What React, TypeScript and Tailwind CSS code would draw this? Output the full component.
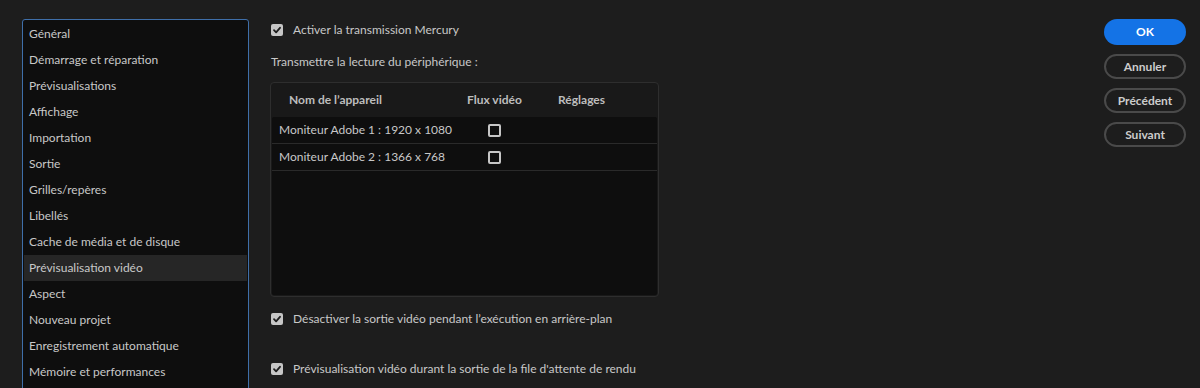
import React from "react";

const sections = [
  "Général",
  "Démarrage et réparation",
  "Prévisualisations",
  "Affichage",
  "Importation",
  "Sortie",
  "Grilles/repères",
  "Libellés",
  "Cache de média et de disque",
  "Prévisualisation vidéo",
  "Aspect",
  "Nouveau projet",
  "Enregistrement automatique",
  "Mémoire et performances",
];

const devices = ["Moniteur Adobe 1 : 1920 x 1080", "Moniteur Adobe 2 : 1366 x 768"];

const Checked = () => (
  <span className="flex h-[12px] w-[12px] items-center justify-center rounded-[2px] bg-[#c6c6c6]">
    <svg width="10" height="10" viewBox="0 0 10 10">
      <path d="M2 5.2 L4.1 7.3 L8 2.8" fill="none" stroke="#1d1d1d" strokeWidth="1.8" strokeLinecap="round" strokeLinejoin="round" />
    </svg>
  </span>
);

const Unchecked = () => <span className="block h-[13px] w-[13px] rounded-[2px] border-2 border-[#c6c6c6]" />;

const CheckRow = ({ label }: { label: string }) => (
  <div className="flex h-[14px] items-center gap-[10px] pl-px">
    <Checked />
    <span>{label}</span>
  </div>
);

const App = () => {
  return (
    <div
      className="flex h-[388px] w-[1200px] overflow-hidden bg-[#1d1d1d] text-[12px] text-[#c8c8c8]"
      style={{ fontFamily: "Lato, 'Open Sans', sans-serif" }}
    >
      {/* left nav */}
      <div className="pl-[22px] pt-[19px]">
        <div className="h-[390px] w-[227px] rounded-[3px] border border-[#3f6fa9] bg-[#0e0e0e] px-px pt-px">
          {sections.map((s) => (
            <div
              key={s}
              className={`flex h-[26px] items-center px-[5px] ${s === "Prévisualisation vidéo" ? "bg-[#262626]" : ""}`}
            >
              {s}
            </div>
          ))}
        </div>
      </div>

      {/* settings */}
      <div className="ml-[21px] flex flex-1 flex-col pt-[23px]">
        <CheckRow label="Activer la transmission Mercury" />
        <div className="mt-[18px] flex h-[14px] items-center pl-px">Transmettre la lecture du périphérique :</div>
        <div className="mt-[13px] flex h-[215px] w-[389px] flex-col rounded-[4px] border border-[#2e2e2e] bg-[#191919] px-px pb-px">
          <div className="flex h-[34px] shrink-0 items-center font-bold text-[#bdbdbd]">
            <span className="w-[195px] pl-[17px]">Nom de l’appareil</span>
            <span className="w-[91px]">Flux vidéo</span>
            <span>Réglages</span>
          </div>
          <div className="flex flex-1 flex-col rounded-[2px] bg-[#0e0e0e]">
            {devices.map((d) => (
              <div key={d} className="flex h-[27px] items-center border-b border-[#2a2a2a]">
                <span className="w-[216px] pl-[7px]">{d}</span>
                <Unchecked />
              </div>
            ))}
          </div>
        </div>
        <div className="mt-[15px]">
          <CheckRow label="Désactiver la sortie vidéo pendant l’exécution en arrière-plan" />
        </div>
        <div className="mt-[36px]">
          <CheckRow label="Prévisualisation vidéo durant la sortie de la file d'attente de rendu" />
        </div>
      </div>

      {/* buttons */}
      <div className="mr-[14px] flex w-[82px] flex-col gap-[9px] pt-[19px] text-[12px] font-bold">
        <button className="h-[26px] rounded-full bg-[#1473e6] text-white">OK</button>
        <button className="h-[25px] rounded-full border-2 border-[#4a4a4a] text-[#cccccc]">Annuler</button>
        <button className="h-[25px] rounded-full border-2 border-[#4a4a4a] text-[#cccccc]">Précédent</button>
        <button className="h-[25px] rounded-full border-2 border-[#4a4a4a] text-[#cccccc]">Suivant</button>
      </div>
    </div>
  );
};

export default App;
